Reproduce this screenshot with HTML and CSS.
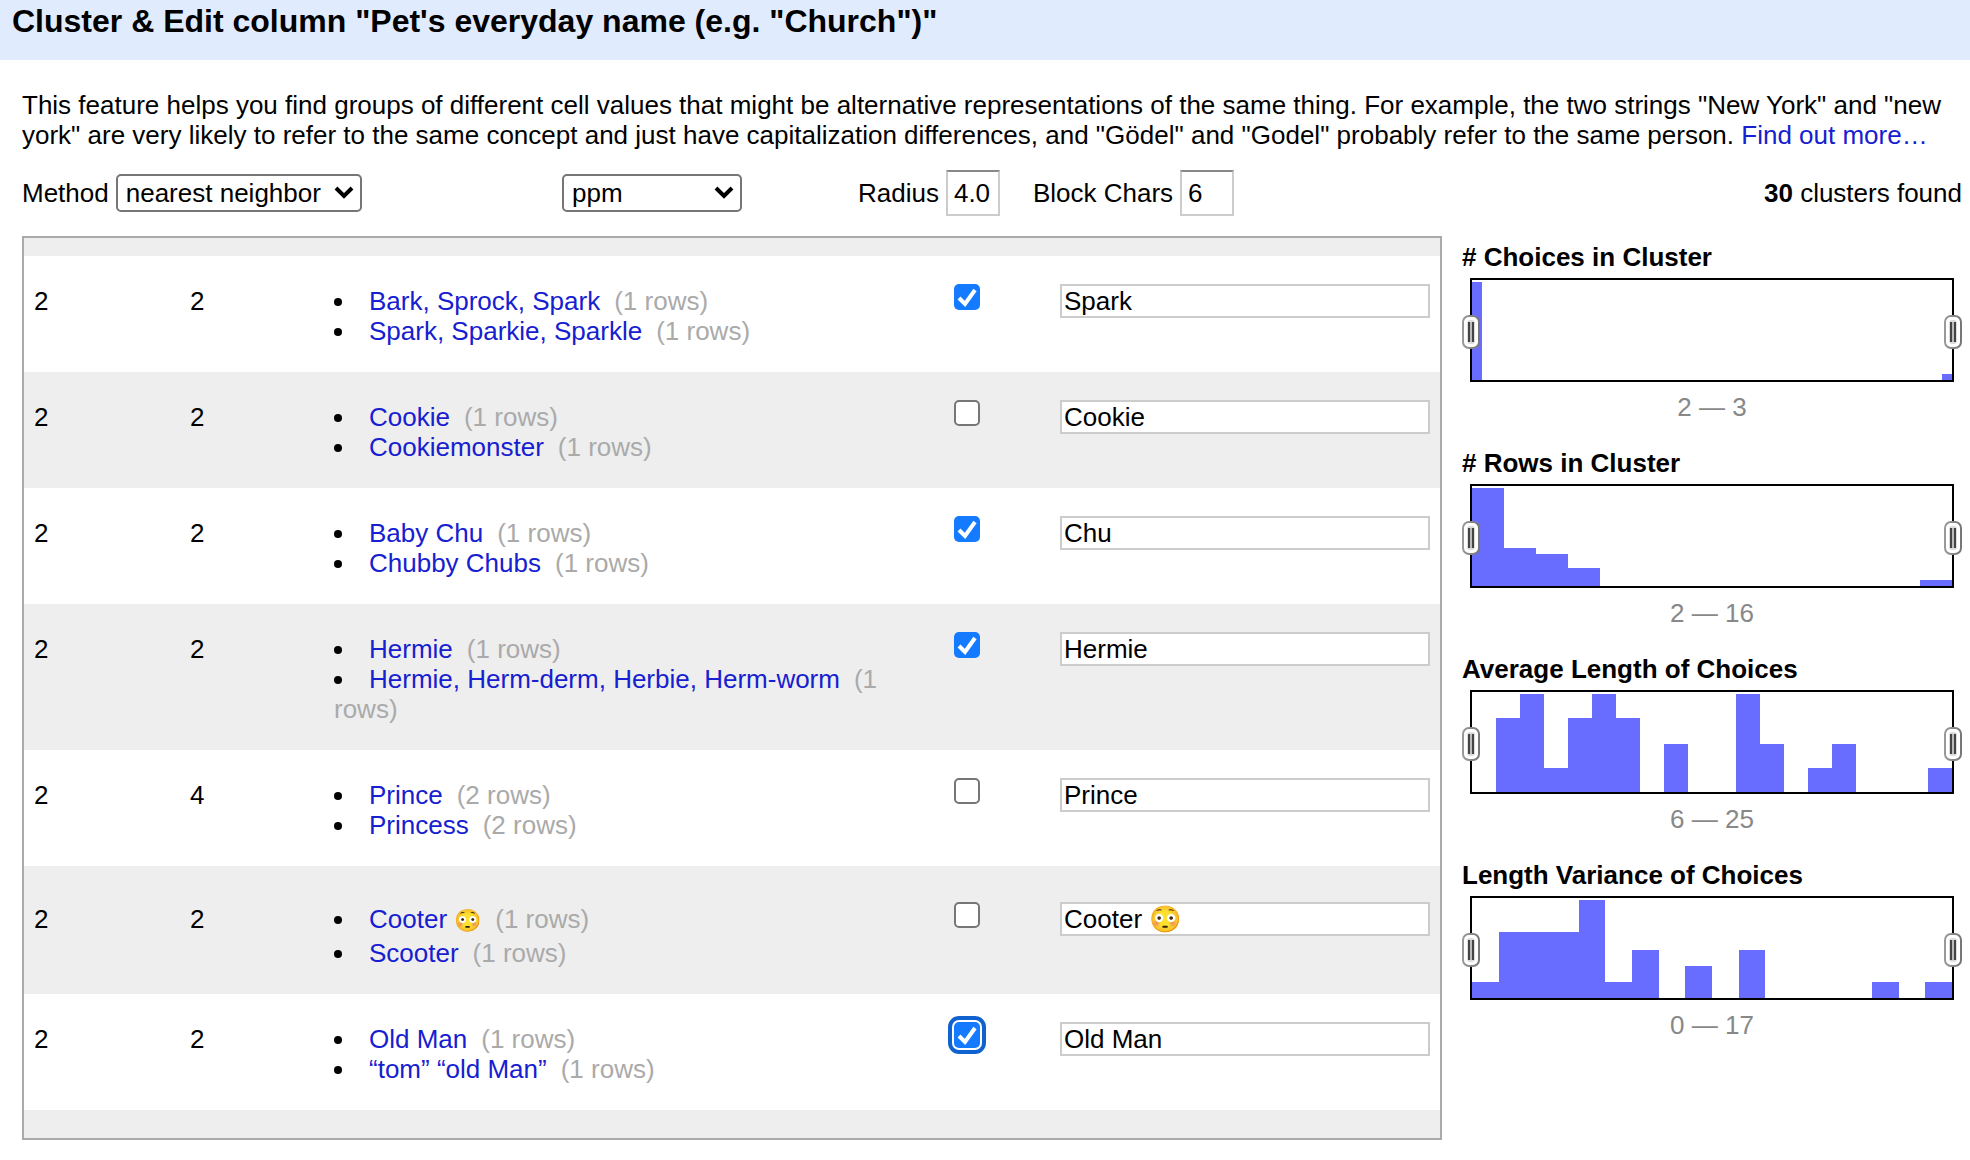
FILE: index.html
```html
<!DOCTYPE html>
<html lang="en">
<head>
<meta charset="utf-8">
<title>Cluster &amp; Edit</title>
<link rel="stylesheet" href="styles.css">
</head>
<body>
<header class="dialog-header"><h1>Cluster &amp; Edit column "Pet's everyday name (e.g. "Church")"</h1></header>
<main class="dialog-body">
  <p class="intro">This feature helps you find groups of different cell values that might be alternative representations of the same thing. For example, the two strings "New York" and "new york" are very likely to refer to the same concept and just have capitalization differences, and "Gödel" and "Godel" probably refer to the same person. <a href="#more">Find out more…</a></p>

  <form class="controls">
    <div class="field method">
      <label for="method">Method</label>
      <select id="method" class="select"><option>nearest neighbor</option><option>key collision</option></select>
    </div>
    <div class="distance">
      <select class="select wide" aria-label="Distance function"><option>ppm</option><option>levenshtein</option></select>
    </div>
    <div class="params">
      <div class="field"><label for="radius">Radius</label><input id="radius" class="number" type="text" value="4.0"></div>
      <div class="field"><label for="block">Block Chars</label><input id="block" class="number" type="text" value="6"></div>
    </div>
    <div class="summary"><b>30</b> clusters found</div>
  </form>

  <div class="content">
    <div class="table-box">
      <table class="clusters">
        <colgroup><col class="c-size"><col class="c-rows"><col class="c-values"><col class="c-merge"><col class="c-new"></colgroup>
        <tbody>
        <tr class="above"><td colspan="5"></td></tr>
        <tr>
          <td class="num">2</td><td class="num">2</td>
          <td><ul><li><a href="#v">Bark, Sprock, Spark</a><span class="count">(1 rows)</span></li><li><a href="#v">Spark, Sparkie, Sparkle</a><span class="count">(1 rows)</span></li></ul></td>
          <td><input type="checkbox" aria-label="Merge Spark" checked></td>
          <td><input class="value" type="text" aria-label="New value" value="Spark"></td>
        </tr>
        <tr>
          <td class="num">2</td><td class="num">2</td>
          <td><ul><li><a href="#v">Cookie</a><span class="count">(1 rows)</span></li><li><a href="#v">Cookiemonster</a><span class="count">(1 rows)</span></li></ul></td>
          <td><input type="checkbox" aria-label="Merge Cookie"></td>
          <td><input class="value" type="text" aria-label="New value" value="Cookie"></td>
        </tr>
        <tr>
          <td class="num">2</td><td class="num">2</td>
          <td><ul><li><a href="#v">Baby Chu</a><span class="count">(1 rows)</span></li><li><a href="#v">Chubby Chubs</a><span class="count">(1 rows)</span></li></ul></td>
          <td><input type="checkbox" aria-label="Merge Chu" checked></td>
          <td><input class="value" type="text" aria-label="New value" value="Chu"></td>
        </tr>
        <tr>
          <td class="num">2</td><td class="num">2</td>
          <td><ul><li><a href="#v">Hermie</a><span class="count">(1 rows)</span></li><li><a href="#v">Hermie, Herm-derm, Herbie, Herm-worm</a><span class="count">(1 rows)</span></li></ul></td>
          <td><input type="checkbox" aria-label="Merge Hermie" checked></td>
          <td><input class="value" type="text" aria-label="New value" value="Hermie"></td>
        </tr>
        <tr>
          <td class="num">2</td><td class="num">4</td>
          <td><ul><li><a href="#v">Prince</a><span class="count">(2 rows)</span></li><li><a href="#v">Princess</a><span class="count">(2 rows)</span></li></ul></td>
          <td><input type="checkbox" aria-label="Merge Prince"></td>
          <td><input class="value" type="text" aria-label="New value" value="Prince"></td>
        </tr>
        <tr class="emoji-row">
          <td class="num">2</td><td class="num">2</td>
          <td><ul><li><a href="#v">Cooter <span class="emoji">😳</span></a><span class="count">(1 rows)</span></li><li><a href="#v">Scooter</a><span class="count">(1 rows)</span></li></ul></td>
          <td><input type="checkbox" aria-label="Merge Cooter"></td>
          <td><input class="value" type="text" aria-label="New value" value="Cooter 😳"></td>
        </tr>
        <tr>
          <td class="num">2</td><td class="num">2</td>
          <td><ul><li><a href="#v">Old Man</a><span class="count">(1 rows)</span></li><li><a href="#v">“tom” “old Man”</a><span class="count">(1 rows)</span></li></ul></td>
          <td><input class="focused" type="checkbox" aria-label="Merge Old Man" checked></td>
          <td><input class="value" type="text" aria-label="New value" value="Old Man"></td>
        </tr>
        <tr class="below"><td colspan="5"></td></tr>
        </tbody>
      </table>
    </div>

    <aside class="facets">
      <svg class="defs" width="0" height="0" aria-hidden="true">
        <defs>
          <linearGradient id="edge" x1="0" x2="1" y1="0" y2="0"><stop offset="0" stop-color="#999"/><stop offset="1" stop-color="#777"/></linearGradient>
          <symbol id="grip" viewBox="0 0 18 34">
            <rect x="1" y="1" width="16" height="32" rx="6" fill="#fff" stroke="url(#edge)" stroke-width="2"/>
            <rect x="5" y="5" width="8" height="24" rx="3" fill="#ddd"/>
            <path d="M9 7v20" stroke="#bbb" stroke-width="2"/>
            <path d="M7 7v20M11 7v20" stroke="#444" stroke-width="2"/>
          </symbol>
        </defs>
      </svg>
      <section class="facet">
        <h2># Choices in Cluster</h2>
        <div class="histogram">
          <div class="bars" id="choices"></div>
          <button type="button" class="handle from" aria-label="Minimum"><svg><use href="#grip"/></svg></button>
          <button type="button" class="handle to" aria-label="Maximum"><svg><use href="#grip"/></svg></button>
        </div>
        <p class="range">2 — 3</p>
      </section>
      <section class="facet">
        <h2># Rows in Cluster</h2>
        <div class="histogram">
          <div class="bars" id="rows"></div>
          <button type="button" class="handle from" aria-label="Minimum"><svg><use href="#grip"/></svg></button>
          <button type="button" class="handle to" aria-label="Maximum"><svg><use href="#grip"/></svg></button>
        </div>
        <p class="range">2 — 16</p>
      </section>
      <section class="facet">
        <h2>Average Length of Choices</h2>
        <div class="histogram">
          <div class="bars" id="average"></div>
          <button type="button" class="handle from" aria-label="Minimum"><svg><use href="#grip"/></svg></button>
          <button type="button" class="handle to" aria-label="Maximum"><svg><use href="#grip"/></svg></button>
        </div>
        <p class="range">6 — 25</p>
      </section>
      <section class="facet">
        <h2>Length Variance of Choices</h2>
        <div class="histogram">
          <div class="bars" id="variance"></div>
          <button type="button" class="handle from" aria-label="Minimum"><svg><use href="#grip"/></svg></button>
          <button type="button" class="handle to" aria-label="Maximum"><svg><use href="#grip"/></svg></button>
        </div>
        <p class="range">0 — 17</p>
      </section>
    </aside>
  </div>
</main>
<script src="bars.js"></script>
</body>
</html>
```
FILE: bars.js
```js
// Bin heights of each histogram, in percent of the plot height.
const bins = {
  choices: [98].concat(Array(46).fill(0), [6]),
  rows: [98, 38, 32, 18, 0, 0, 0, 0, 0, 0, 0, 0, 0, 0, 6],
  average: [0, 74, 98, 24, 74, 98, 74, 0, 48, 0, 0, 98, 48, 0, 24, 48, 0, 0, 0, 24],
  variance: [16, 66, 66, 66, 98, 16, 48, 0, 32, 0, 48, 0, 0, 0, 0, 16, 0, 16]
};
for (const [id, heights] of Object.entries(bins)) {
  const plot = document.getElementById(id);
  for (const h of heights) {
    const bar = document.createElement('span');
    bar.style.height = h + '%';
    plot.append(bar);
  }
}
```
FILE: styles.css
```css
* { box-sizing: border-box; }

body {
  margin: 0;
  background: #fff;
  color: #000;
  font: 26px/30px "Liberation Sans", Arial, sans-serif;
}

h1, h2, p, ul { margin: 0; }
input, select, button { font: inherit; color: inherit; }
a { color: #1620d0; text-decoration: none; }

.dialog-header { padding: 1px 12px 19px; background: #e0ebfd; }
h1 { font-size: 32px; line-height: 40px; }

.dialog-body { padding: 30px 8px 20px 22px; }

.controls { display: flex; align-items: center; padding: 20px 0; }
.field { display: flex; align-items: center; gap: 7px; }
.method { width: 540px; }
.distance { width: 296px; }
.params { display: flex; gap: 33px; }
.summary { margin-left: auto; }

.select {
  appearance: none;
  height: 38px;
  padding: 0 38px 0 8px;
  border: 2px solid #767676;
  border-radius: 5px;
  background: #fff url("data:image/svg+xml,%3Csvg xmlns='http://www.w3.org/2000/svg' width='20' height='14'%3E%3Cpath d='M2 2l8 8 8-8' fill='none' stroke='%23000' stroke-width='4'/%3E%3C/svg%3E") no-repeat right 6px center;
}
.select.wide { width: 180px; }

.number {
  width: 54px;
  height: 46px;
  padding: 0 6px;
  border: 2px solid #ccc;
  border-top-color: #888;
}

.content { display: flex; align-items: flex-start; gap: 20px; }
.table-box { flex: 1; min-width: 0; border: 2px solid #aaa; }

.clusters { width: 100%; border-collapse: collapse; table-layout: fixed; }
.c-size { width: 156px; }
.c-rows { width: 146px; }
.c-values { width: 588px; }
.c-merge { width: 138px; }
.clusters td { padding: 4px 10px 0 8px; vertical-align: baseline; }
.clusters .num { padding-left: 10px; }
.clusters tr:nth-child(odd) { background: #eee; }
.clusters .above td { height: 18px; padding: 0; }
.clusters .below td { height: 28px; padding: 0; }
.clusters ul { margin: 26px 0; padding: 0; list-style: disc inside; }
.count { margin-left: 14px; color: #aaa; }
.emoji-row li:first-child { padding-top: 6px; line-height: 34px; }
.emoji { font-size: 22px; }

.clusters input[type="checkbox"] {
  appearance: none;
  width: 26px;
  height: 26px;
  margin: 0 0 0 32px;
  border: 2px solid #767676;
  border-radius: 5px;
  background: #fff;
  vertical-align: baseline;
}
.clusters input[type="checkbox"]:checked {
  border: 0;
  background: #147aff url("data:image/svg+xml,%3Csvg xmlns='http://www.w3.org/2000/svg' width='26' height='26'%3E%3Cpath d='M5 14l6 6L21 6' fill='none' stroke='%23fff' stroke-width='4'/%3E%3C/svg%3E") no-repeat center;
}
.clusters input.focused { outline: 4px solid #1062cf; outline-offset: 2px; }

.value {
  width: 100%;
  height: 34px;
  padding: 2px 2px 0;
  border: 2px solid #ccc;
  background: #fff;
}

.facets { width: 500px; padding-top: 6px; }
.defs { display: block; }
.facet { margin-bottom: 26px; }
h2 { font-size: 26px; line-height: 30px; }
.histogram { position: relative; height: 104px; margin: 6px 8px 10px; border: 2px solid #000; }
.bars { display: flex; align-items: flex-end; height: 100%; }
.bars span { flex: 1; background: #686cff; }
.handle {
  position: absolute;
  top: 35px;
  width: 18px;
  height: 34px;
  padding: 0;
  border: 0;
  background: none;
}
.handle svg { display: block; width: 18px; height: 34px; }
.from { left: -10px; }
.to { right: -10px; }
.range { text-align: center; color: #888; }
```
